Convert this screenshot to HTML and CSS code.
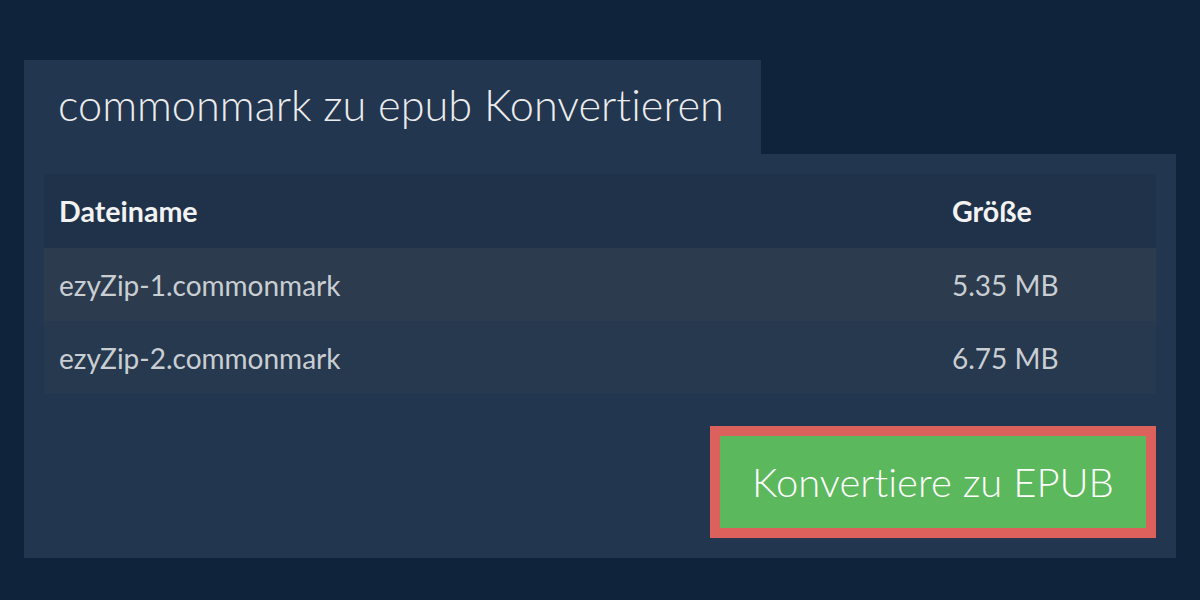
FILE: index.html
```html
<!DOCTYPE html>
<html lang="de">
<head>
<meta charset="utf-8">
<title>commonmark zu epub Konvertieren</title>
<link rel="stylesheet" href="styles.css">
</head>
<body>
<main class="page">
  <div class="tab"><h1 class="title">commonmark zu epub Konvertieren</h1></div>
  <section class="panel">
    <table class="files">
      <thead>
        <tr><th class="col-name">Dateiname</th><th class="col-size">Größe</th></tr>
      </thead>
      <tbody>
        <tr class="odd"><td>ezyZip-1.commonmark</td><td>5.35 MB</td></tr>
        <tr class="even"><td>ezyZip-2.commonmark</td><td>6.75 MB</td></tr>
      </tbody>
    </table>
    <div class="actions">
      <button class="convert" type="button">Konvertiere zu EPUB</button>
    </div>
  </section>
</main>
</body>
</html>
```

FILE: styles.css
```css
html, body {
  margin: 0;
  padding: 0;
  background: #0f233a;
  font-family: Lato, "Open Sans", sans-serif;
  font-variant-ligatures: no-common-ligatures;
}

.page {
  padding: 60px 24px 0;
}

.tab {
  display: inline-block;
  background: #22364f;
  height: 94px;
  padding: 0 37px 0 34px;
  box-sizing: border-box;
}

.title {
  margin: 0;
  font-weight: 300;
  font-size: 43.3px;
  line-height: 88px;
  color: #ececec;
}

.panel {
  background: #22364f;
  padding: 20px;
}

.files {
  width: 100%;
  border-collapse: collapse;
  font-size: 28px;
}

.files th {
  text-align: left;
  font-weight: 700;
  font-size: 28.6px;
  color: #f2f2f2;
  background: #1f3249;
  height: 74px;
  padding: 0 15px;
}

.files td {
  color: #c9ced3;
  height: 73px;
  padding: 0 15px;
}

.col-size {
  width: 189px;
}

.odd td {
  background: #2c3b4d;
}

.even td {
  background: #26394f;
}

.actions {
  display: flex;
  justify-content: flex-end;
  margin-top: 32px;
}

.convert {
  background: #5cb85c;
  border: 10px solid #dc605c;
  height: 112px;
  width: 446px;
  font-family: Lato, "Open Sans", sans-serif;
  font-variant-ligatures: no-common-ligatures;
  font-weight: 300;
  font-size: 40px;
  color: #ffffff;
  padding: 0;
}
```
